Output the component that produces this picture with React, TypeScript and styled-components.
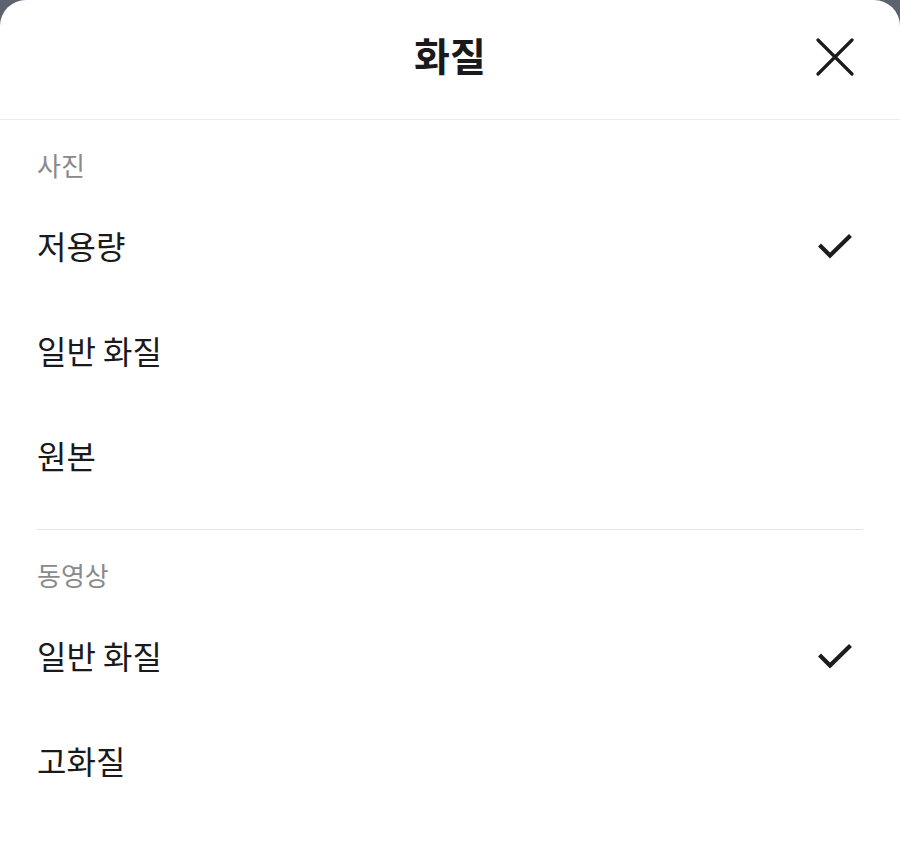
import { createGlobalStyle, styled } from "styled-components";

const GlobalStyle = createGlobalStyle`
  html, body {
    margin: 0;
    padding: 0;
    background: #5b646e;
  }
  body {
    font-family: "Noto Sans CJK KR", "Noto Sans", sans-serif;
  }
`;

interface Option {
  label: string;
  selected?: boolean;
}

interface Group {
  title: string;
  options: Option[];
}

const groups: Group[] = [
  {
    title: "사진",
    options: [
      { label: "저용량", selected: true },
      { label: "일반 화질" },
      { label: "원본" },
    ],
  },
  {
    title: "동영상",
    options: [{ label: "일반 화질", selected: true }, { label: "고화질" }],
  },
];

function CloseIcon() {
  return (
    <svg width="38" height="38" viewBox="0 0 38 38">
      <path
        d="M2 2 L36 36 M36 2 L2 36"
        stroke="#1c1c1c"
        strokeWidth="3.2"
        strokeLinecap="round"
        fill="none"
      />
    </svg>
  );
}

function CheckIcon() {
  return (
    <svg width="34" height="26" viewBox="0 0 34 26">
      <path
        d="M3 12.5 L12 21.5 L31 3"
        stroke="#1c1c1c"
        strokeWidth="4.2"
        strokeLinecap="square"
        strokeLinejoin="miter"
        fill="none"
      />
    </svg>
  );
}

function App() {
  return (
    <>
      <GlobalStyle />
      <Sheet>
        <Header>
          <Title>화질</Title>
          <CloseButton aria-label="닫기">
            <CloseIcon />
          </CloseButton>
        </Header>
        {groups.map((group, i) => (
          <Section key={group.title}>
            {i > 0 && <Divider />}
            <SectionLabel>{group.title}</SectionLabel>
            {group.options.map((opt) => (
              <Row key={opt.label}>
                <RowText>{opt.label}</RowText>
                {opt.selected ? <CheckIcon /> : null}
              </Row>
            ))}
          </Section>
        ))}
      </Sheet>
    </>
  );
}

export default App;

const Sheet = styled.div`
  background: #ffffff;
  border-radius: 26px 26px 0 0;
  height: 860px;
  overflow: hidden;
`;

const Header = styled.div`
  position: relative;
  height: 119px;
  display: flex;
  align-items: center;
  justify-content: center;
  border-bottom: 1px solid #ececec;
`;

const Title = styled.h1`
  margin: 0;
  font-size: 39px;
  font-weight: 700;
  color: #1a1a1a;
  line-height: 1;
  padding-bottom: 10px;
`;

const CloseButton = styled.button`
  position: absolute;
  right: 46px;
  top: 38px;
  border: 0;
  padding: 0;
  background: none;
  display: flex;
`;

const Section = styled.div`
  display: flex;
  flex-direction: column;
`;

const Divider = styled.div`
  margin: 20px 37px 0;
  height: 1px;
  background: #e4e4e4;
`;

const SectionLabel = styled.div`
  padding: 28px 37px 12px;
  height: 34px;
  line-height: 34px;
  font-size: 26px;
  color: #8a8a8a;
`;

const Row = styled.div`
  height: 105px;
  display: flex;
  align-items: center;
  justify-content: space-between;
  padding: 0 48px 0 37px;
`;

const RowText = styled.span`
  font-size: 32px;
  color: #1a1a1a;
  padding-bottom: 4px;
`;
